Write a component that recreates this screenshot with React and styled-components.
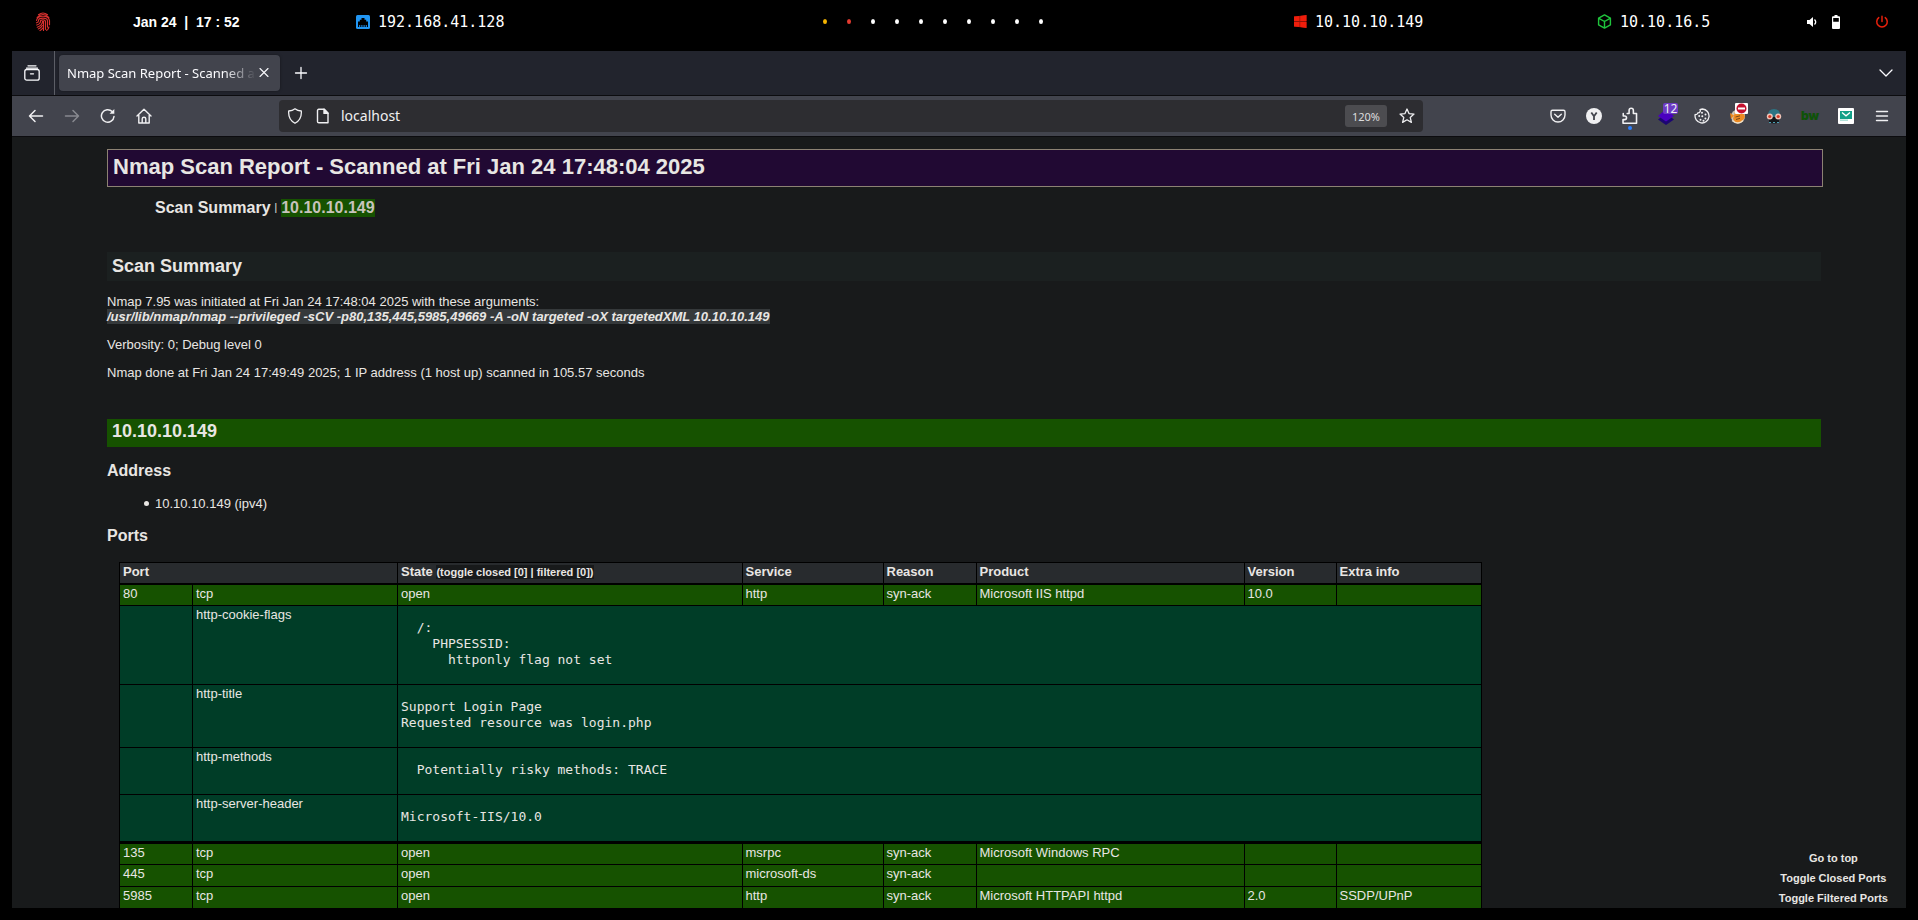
import React from "react";
import styled, { createGlobalStyle, css } from "styled-components";

const Global = createGlobalStyle`
  * { box-sizing: border-box; }
  html, body, #root { height: 100%; }
  body { margin: 0; background: #000; color: #e8e6e3; font-family: "Liberation Sans", Arial, sans-serif; }
  button { font: inherit; color: inherit; background: none; border: 0; padding: 0; cursor: pointer; }
  a { color: inherit; text-decoration: none; }
  svg { display: block; }
`;

const Desktop = styled.div`
  display: flex;
  flex-direction: column;
  height: 100vh;
  padding-bottom: 12px;
  background: #000;
`;

/* ---------- status bar ---------- */
const StatusBar = styled.header`
  flex: none;
  display: grid;
  grid-template-columns:
    minmax(0, 98fr) minmax(0, 223fr) minmax(0, 467fr) minmax(0, 471fr)
    minmax(0, 303fr) minmax(0, 210fr) minmax(0, 111fr);
  align-items: center;
  height: 51px;
  padding: 0 0 8px 35px;
  color: #fff;
`;
const Clock = styled.time`
  font-size: 14px;
  font-weight: 700;
  white-space: pre;
`;
const Address = styled.div`
  display: flex;
  align-items: center;
  gap: 8px;
  font: 15px/20px "DejaVu Sans Mono", monospace;
  white-space: nowrap;
`;
const Dots = styled.nav`
  display: flex;
  gap: 20px;
`;
const Dot = styled.button`
  && {
    width: 4px;
    height: 5px;
    border-radius: 50%;
    background: ${(p) => p.$color || "#fff"};
  }
`;
const Tray = styled.div`
  display: flex;
  align-items: center;
`;
const TrayButton = styled.button`
  && { margin-right: ${(p) => p.$after || 0}px; }
`;

/* ---------- browser chrome ---------- */
const Browser = styled.section`
  flex: 1;
  min-height: 0;
  display: flex;
  flex-direction: column;
  margin: 0 12px;
  background: #181a1b;
  font-family: "Noto Sans", sans-serif;
`;
const TabStrip = styled.div`
  flex: none;
  display: flex;
  align-items: center;
  height: 44px;
  background: #22242d;
  color: #fbfbfe;
`;
const FirefoxView = styled.button`
  && {
    display: grid;
    place-items: center;
    width: 43px;
    height: 44px;
    padding-right: 2px;
    border-right: 1px solid #5c5e66;
  }
`;
const Tab = styled.div`
  display: flex;
  align-items: center;
  width: 221px;
  height: 36px;
  margin-left: 4px;
  padding: 0 8px;
  border-radius: 4px;
  background: #42444d;
  box-shadow: 0 0 3px rgba(0, 0, 0, 0.4);
  font-size: 13px;
`;
const TabTitle = styled.span`
  flex: 1;
  min-width: 0;
  white-space: nowrap;
  mask-image: linear-gradient(to left, transparent, #000 32px);
`;
const StripButton = styled.button`
  && {
    display: grid;
    place-items: center;
    width: 40px;
    height: 36px;
    margin-left: ${(p) => (p.$end ? "auto" : "1px")};
  }
`;
const Toolbar = styled.div`
  flex: none;
  display: flex;
  align-items: center;
  height: 42px;
  padding: 0 6px;
  border-top: 1px solid #0c0c0f;
  border-bottom: 1px solid #0c0c0f;
  background: #42444d;
  color: #f0f0f2;
`;
const ToolButton = styled.button`
  && {
    position: relative;
    display: grid;
    place-items: center;
    flex: none;
    width: 36px;
    height: 36px;
    opacity: ${(p) => (p.disabled ? 0.4 : 1)};
  }
`;
const CountBadge = styled.span`
  position: absolute;
  top: 5px;
  right: 6px;
  width: 15px;
  height: 11px;
  border-radius: 2px;
  background: #6c3bc4;
  font-size: 12px;
  line-height: 11px;
  text-align: center;
`;
const NewDot = styled.i`
  position: absolute;
  bottom: 4px;
  left: 16px;
  width: 4px;
  height: 4px;
  border-radius: 50%;
  background: #2a7fff;
`;
const UrlBar = styled.form`
  flex: 1;
  min-width: 0;
  display: flex;
  align-items: center;
  height: 32px;
  margin: 0 117px;
  padding: 0 8px;
  border-radius: 4px;
  background: #2d2d31;
`;
const UrlInput = styled.input`
  flex: 1;
  min-width: 0;
  margin-left: 10px;
  padding: 0;
  border: 0;
  outline: 0;
  background: none;
  color: #f0f0f2;
  font: 14px/20px "Noto Sans", sans-serif;
`;
const ZoomButton = styled.button`
  && {
    height: 22px;
    margin-right: 12px;
    padding: 0 7px;
    border-radius: 3px;
    background: #4c4c50;
    color: #dcdcde;
    font-size: 11px;
  }
`;
const UrlIcon = styled.span`
  margin-right: ${(p) => p.$after || 0}px;
`;

/* ---------- report ---------- */
const Viewport = styled.main`
  position: relative;
  flex: 1;
  min-height: 0;
  overflow: hidden;
  padding: 12px 83px 0 95px;
  font-family: "Liberation Sans", Arial, sans-serif;
  font-size: 13px;
  line-height: 15px;
`;
const Title = styled.h1`
  height: 38px;
  margin: 0;
  padding: 0 5px;
  border: 1px solid #8c8273;
  background: #210933;
  font-size: 22px;
  line-height: 34px;
`;
const Menu = styled.nav`
  display: flex;
  align-items: center;
  gap: 4px;
  padding: 12px 48px 0;
  font-size: 10px;
  line-height: 18px;
`;
const MenuLink = styled.a`
  font-size: 16px;
  font-weight: 700;
  ${(p) => p.$up && css`background: #165200; color: #c8c3bc;`}
`;
const SectionTitle = styled.h2`
  height: 29px;
  margin: 35px 2px 0 0;
  padding: 0 5px;
  background: #1b2020;
  font-size: 18px;
  line-height: 28px;
  ${(p) => p.$host && css`
    height: 28px;
    margin-top: 39px;
    background: #165200;
    line-height: 24px;
  `}
`;
const Paragraph = styled.p`
  margin: 13px 0 0;
`;
const Command = styled.em`
  background: #35393b;
  font-weight: 700;
`;
const SubTitle = styled.h3`
  margin: 15px 0 0;
  font-size: 16px;
  line-height: 18px;
`;
const AddressList = styled.ul`
  margin: 16px 0;
  padding-left: 37px;
  list-style: none;
`;
const AddressItem = styled.li`
  display: flex;
  align-items: center;
  gap: 6px;
  &::before {
    content: "";
    width: 5px;
    height: 5px;
    border-radius: 50%;
    background: currentColor;
  }
`;
const PortTable = styled.table`
  table-layout: fixed;
  width: 79.4%;
  margin: 17px 0 0 12px;
  border-collapse: collapse;
  background: #000;
  line-height: 16px;
  text-align: left;
`;
const HeadCell = styled.th`
  height: 21px;
  padding: 0 3px 1px;
  border: 1px solid #000;
  border-bottom-width: 2px;
  background: #282b2e;
`;
const Toggle = styled.button`
  && {
    background: #181a1b;
    font-size: 11px;
    line-height: 14px;
  }
`;
const PortRow = styled.tr`
  border-top: ${(p) => (p.$first ? 3 : 1)}px solid #000;
`;
const Cell = styled.td`
  height: 22px;
  padding: 1px 3px 3px;
  border: 1px solid #000;
  background: ${(p) => (p.$script ? "#003d27" : "#165200")};
  vertical-align: top;
`;
const Output = styled.pre`
  margin: 13px 0;
  font: 13px/16px "DejaVu Sans Mono", monospace;
`;
const FloatMenu = styled.nav`
  position: absolute;
  right: 18px;
  bottom: 0;
  display: flex;
  flex-direction: column;
  align-items: center;
  font-size: 11px;
  font-weight: 700;
  line-height: 20px;
`;

/* ---------- icons ---------- */
const Line = ({ size = 16, w = 1.3, color = "currentColor", children, ...rest }) => (
  <svg width={size} height={size} viewBox="0 0 16 16" fill="none" stroke={color} strokeWidth={w} strokeLinecap="round" strokeLinejoin="round" aria-hidden="true" {...rest}>
    {children}
  </svg>
);
const FingerprintIcon = () => (
  <svg width="16" height="20" viewBox="0 0 16 20" fill="none" stroke="#d8302e" strokeWidth="1.15" strokeLinecap="round" aria-hidden="true">
    <path d="M3.500 2.700q4.500-3.400 9 0M2.200 5.500q5.800-6 11.600 0M1.500 8.500q.6-4.300 6.500-4.300t6.500 4.500v4M1.500 10.800q2-.3 2-2.300 0-2.400 4.500-2.400t4.500 3v6M1.700 13q3.800-1 3.800-4 0-1.200 2.500-1.200t2.500 2v7.500M2.300 15.200q5.200-2 5.200-5.700h1v9M3.300 17q3-1.200 4-3.500M5 18.600q1.600-.8 2.500-2.400M13.900 15l-.8 2M11.700 18.300l.5-.6" />
  </svg>
);
const EthernetIcon = () => (
  <svg width="14" height="14" viewBox="0 0 14 14" aria-hidden="true">
    <rect width="14" height="14" rx="1.5" fill="#2196f3" />
    <path d="M2 12V6.500h1.800V4.700h1.700V3h3v1.700h1.700v1.800H12V12h-1.200v-2h-1v2H8.600v-2h-1v2H6.400v-2h-1v2H4.200v-2h-1v2z" fill="#000" />
  </svg>
);
const WindowsIcon = () => (
  <svg width="13" height="13" viewBox="0 0 13 13" aria-hidden="true">
    <path d="M0 1.500 12.500 0v13L0 11.500z" fill="#8f1208" />
    <path d="M0 1.500 5.500 1v5H0zM6.200 .9 12.500 0v6H6.200zM0 7h5.500v5L0 11.500zM6.200 7h6.300v6l-6.300-.9z" fill="#f01e0c" />
  </svg>
);
const CubeIcon = () => (
  <Line size={15} w={1.5} color="#1fc43c"><path d="M8 1 14.300 4.400v7.200L8 15l-6.300-3.400V4.400zM2 4.600 8 8l6-3.400M8 8v7" /></Line>
);
const SpeakerIcon = () => (
  <svg width="10" height="12" viewBox="0 0 10 12" fill="#fff"><path d="M0 4h2.500L6 1v10L2.500 8H0z" /><path d="M7.500 3.500q2.400 2.500 0 5" fill="none" stroke="#fff" strokeWidth="1.300" /></svg>
);
const BatteryIcon = () => (
  <svg width="8" height="14" viewBox="0 0 8 14"><path fillRule="evenodd" fill="#fff" d="M2.500 0h3v1.200H7q1 0 1 1V13q0 1-1 1H1q-1 0-1-1V2.200q0-1 1-1h1.500zM1.200 3v3.800h5.600V3z" /></svg>
);
const PowerIcon = () => (
  <Line size={14} w={1.7} color="#e8200c"><path d="M8 1.500v6M4.300 3a6 6 0 1 0 7.400 0" /></Line>
);
const PuzzleIcon = () => (
  <Line size={18} w={1.4}><path d="M2 5.800V8h1.300a1.600 1.600 0 0 1 0 3.200H1.800v3.200h12V5.800h-2.800V3a1.900 1.900 0 0 0-3.800 0v2.800H5.500" /></Line>
);
const LayersIcon = () => (
  <svg width="18" height="18" viewBox="0 0 18 18"><path d="M9 6 17 12.500 9 18 1 12.500z" fill="#1c0672" /><path d="M9 2 17 9 9 14.500 1 9z" fill="#4a00c0" /></svg>
);
const CookieIcon = () => (
  <Line><path d="M8.500 1a7 7 0 1 1-7.300 5.500 2 2 0 0 0 2.600-1.700 2.200 2.200 0 0 0 2.200-3.300A7 7 0 0 1 8.500 1z" /><path strokeWidth="2" d="M8 4.800h0M5.200 8h0M8.300 8.300h0M11.500 6.500h0M11.400 10.500h0M6.500 11.700h0M9.500 12.800h0" /></Line>
);
const FoxIcon = () => (
  <svg width="20" height="26" viewBox="-1 0 20 26">
    <circle cx="9" cy="13.500" r="7" fill="#cfc6b8" />
    <path d="M1 10 5 12.500l-3 3.500zM4 16l2-7 9 2 1 3-3 5-6 1z" fill="#ee8a22" />
    <path d="M3 17.500q6 5 11 0" fill="none" stroke="#efe0c8" strokeWidth="1.300" />
    <path d="M6.500 14 11 12.800M7 16.500l4-1.200" stroke="#7c4a16" strokeWidth="1" />
    <rect x="6" y="0" width="13" height="11" rx="1" fill="#fff" />
    <circle cx="12.500" cy="5.500" r="5" fill="#c5102e" />
    <rect x="9" y="4.500" width="7" height="2" fill="#fff" />
  </svg>
);
const MaskIcon = () => (
  <svg width="16" height="16" viewBox="0 0 16 16">
    <path d="M2 7q0-6 6-6t6 6v2H2z" fill="#2d7484" />
    <path d="M3 9h10v5.500q-5 2-10 0z" fill="#15181b" />
    <circle cx="3.800" cy="8.500" r="3" fill="#f0c5b8" /><circle cx="12.200" cy="8.500" r="3" fill="#f0c5b8" />
    <circle cx="3.800" cy="8.500" r="1.600" fill="#d23a26" /><circle cx="12.200" cy="8.500" r="1.600" fill="#d23a26" />
    <path d="M3 14.500h2M7 14.500h2M11 14.500h2" stroke="#4aa0b4" strokeWidth="1.200" />
  </svg>
);
const BuiltWith = styled.span`
  color: #0e5208;
  font: 900 12px/16px "Inter", "Noto Sans", sans-serif;
`;
const MailIcon = () => (
  <svg width="16" height="16" viewBox="0 0 16 16">
    <rect width="16" height="16" rx="1" fill="#fff" />
    <path d="M2 3h12v8H2z" fill="#12a088" /><path d="M4 4.500 8 7.800l4-3.300" stroke="#fff" strokeWidth="1.300" fill="none" />
    <path d="M2 11.500h8v1.300H2z" fill="#9edcd0" />
  </svg>
);
const AccountIcon = () => (
  <svg width="16" height="16" viewBox="0 0 16 16"><circle cx="8" cy="8" r="8" fill="#f0f0f2" /><path d="M5.300 4.500 8 8.300l2.700-3.800M8 8.300V12" fill="none" stroke="#42444d" strokeWidth="1.800" /></svg>
);

/* ---------- data ---------- */
const columns = [73, 205, null, 141, 93, 268, 92, 145];
const workspaces = ["#f5b400", "#e53b30", null, null, null, null, null, null, null, null];
const scripts = [
  ["http-cookie-flags", "  /: \n    PHPSESSID: \n      httponly flag not set"],
  ["http-title", "Support Login Page\nRequested resource was login.php"],
  ["http-methods", "  Potentially risky methods: TRACE"],
  ["http-server-header", "Microsoft-IIS/10.0"],
];
const ports = [
  { cells: ["80", "tcp", "open", "http", "syn-ack", "Microsoft IIS httpd", "10.0", ""], scripts },
  { cells: ["135", "tcp", "open", "msrpc", "syn-ack", "Microsoft Windows RPC", "", ""] },
  { cells: ["445", "tcp", "open", "microsoft-ds", "syn-ack", "", "", ""] },
  { cells: ["5985", "tcp", "open", "http", "syn-ack", "Microsoft HTTPAPI httpd", "2.0", "SSDP/UPnP"] },
];

function Status() {
  return (
    <StatusBar>
      <FingerprintIcon />
      <Clock>{"Jan 24  |  17 : 52"}</Clock>
      <Address><EthernetIcon />192.168.41.128</Address>
      <Dots aria-label="Workspaces">
        {workspaces.map((color, i) => <Dot key={i} $color={color} aria-label={`Workspace ${i + 1}`} />)}
      </Dots>
      <Address><WindowsIcon />10.10.10.149</Address>
      <Address><CubeIcon />10.10.16.5</Address>
      <Tray>
        <TrayButton $after={15} aria-label="Volume"><SpeakerIcon /></TrayButton>
        <TrayButton $after={35} aria-label="Battery"><BatteryIcon /></TrayButton>
        <TrayButton aria-label="Power"><PowerIcon /></TrayButton>
      </Tray>
    </StatusBar>
  );
}

function Chrome() {
  return (
    <>
      <TabStrip>
        <FirefoxView aria-label="Recent browsing">
          <Line><path d="M4 .8h8M2.500 3.200h11" /><rect x=".8" y="4.500" width="14.400" height="10.700" rx="2" /><path d="M6.500 8.800h3" /></Line>
        </FirefoxView>
        <Tab>
          <TabTitle>Nmap Scan Report - Scanned a</TabTitle>
          <button aria-label="Close tab"><Line w={1.1}><path d="m4 3.500 8 8m0-8-8 8" /></Line></button>
        </Tab>
        <StripButton aria-label="New tab"><Line><path d="M8 2.500v11M2.500 8h11" /></Line></StripButton>
        <StripButton $end aria-label="List all tabs"><Line><path d="m2 5 6 6 6-6" /></Line></StripButton>
      </TabStrip>
      <Toolbar>
        <ToolButton aria-label="Back"><Line w={1.5}><path d="M14.500 8h-13M7 2.500 1.500 8 7 13.500" /></Line></ToolButton>
        <ToolButton disabled aria-label="Forward"><Line w={1.5}><path d="M1.500 8h13M9 2.500 14.500 8 9 13.500" /></Line></ToolButton>
        <ToolButton aria-label="Reload"><Line w={1.5}><path d="M14 8.500a6.300 6.300 0 1 1-1.800-5" /><path d="M14.300 1v4.800H9.500z" fill="currentColor" stroke="none" /></Line></ToolButton>
        <ToolButton aria-label="Home"><Line w={1.4}><path d="m1 8 7-6.700L15 8M2.800 7v8h10.400V7M6.200 15v-4.200q0-1.500 1.800-1.500t1.800 1.500V15" /></Line></ToolButton>
        <UrlBar onSubmit={(e) => e.preventDefault()}>
          <UrlIcon $after={12}><Line><path d="M8 .8q2.500 2 6.300 2.200Q15 11.500 8 15.300 1 11.500 1.700 3 5.500 2.800 8 .8z" /></Line></UrlIcon>
          <UrlIcon><Line w={1.4}><path d="M3.800 1.300h5.500L13 5v9.700H3.800q-1.300 0-1.300-1.300V2.600q0-1.300 1.300-1.300z" /><path d="M9 1.300V5.400h4z" fill="currentColor" /></Line></UrlIcon>
          <UrlInput aria-label="Address" defaultValue="localhost" />
          <ZoomButton type="button">120%</ZoomButton>
          <button type="button" aria-label="Bookmark this page"><Line><path d="m8 1 2 4.600 5 .5-3.800 3.300 1.200 5L8 11.800l-4.400 2.600 1.200-5L1 6.100l5-.5z" /></Line></button>
        </UrlBar>
        <ToolButton aria-label="Save to Pocket"><Line w={1.4}><path d="M2.500 2.300h11q1.500 0 1.500 1.500V7a7 7 0 0 1-14 0V3.800q0-1.500 1.500-1.500z" /><path d="m4.700 6.300 3.300 3 3.300-3" /></Line></ToolButton>
        <ToolButton aria-label="Account"><AccountIcon /></ToolButton>
        <ToolButton aria-label="Extensions"><PuzzleIcon /><NewDot /></ToolButton>
        <ToolButton aria-label="Layers"><LayersIcon /><CountBadge>12</CountBadge></ToolButton>
        <ToolButton aria-label="Cookie editor"><CookieIcon /></ToolButton>
        <ToolButton aria-label="Proxy"><FoxIcon /></ToolButton>
        <ToolButton aria-label="Dark theme"><MaskIcon /></ToolButton>
        <ToolButton aria-label="BuiltWith"><BuiltWith>bw</BuiltWith></ToolButton>
        <ToolButton aria-label="Mail"><MailIcon /></ToolButton>
        <ToolButton aria-label="Menu"><Line w={1.4}><path d="M2.500 3.500h11M2.500 8h11M2.500 12.500h11" /></Line></ToolButton>
      </Toolbar>
    </>
  );
}

function PortsTable() {
  return (
    <PortTable>
      <colgroup>{columns.map((width, i) => <col key={i} width={width ?? undefined} />)}</colgroup>
      <thead>
        <tr>
          <HeadCell colSpan={2}>Port</HeadCell>
          <HeadCell>State <Toggle>(toggle closed [0] | filtered [0])</Toggle></HeadCell>
          {["Service", "Reason", "Product", "Version", "Extra info"].map((name) => <HeadCell key={name}>{name}</HeadCell>)}
        </tr>
      </thead>
      <tbody>
        {ports.map((port, index) => (
          <React.Fragment key={port.cells[0]}>
            <PortRow $first={Boolean(ports[index - 1]?.scripts)}>
              {port.cells.map((text, i) => <Cell key={i}>{text}</Cell>)}
            </PortRow>
            {port.scripts?.map(([name, output]) => (
              <tr key={name}>
                <Cell $script />
                <Cell $script>{name}</Cell>
                <Cell $script colSpan={6}><Output>{output}</Output></Cell>
              </tr>
            ))}
          </React.Fragment>
        ))}
      </tbody>
    </PortTable>
  );
}

export default function App() {
  return (
    <Desktop>
      <Global />
      <Status />
      <Browser>
        <Chrome />
        <Viewport id="top">
          <Title>Nmap Scan Report - Scanned at Fri Jan 24 17:48:04 2025</Title>
          <Menu>
            <MenuLink href="#summary">Scan Summary</MenuLink>|
            <MenuLink $up href="#host">10.10.10.149</MenuLink>
          </Menu>
          <SectionTitle id="summary">Scan Summary</SectionTitle>
          <Paragraph>
            Nmap 7.95 was initiated at Fri Jan 24 17:48:04 2025 with these arguments:<br />
            <Command>/usr/lib/nmap/nmap --privileged -sCV -p80,135,445,5985,49669 -A -oN targeted -oX targetedXML 10.10.10.149</Command>
          </Paragraph>
          <Paragraph>Verbosity: 0; Debug level 0</Paragraph>
          <Paragraph>Nmap done at Fri Jan 24 17:49:49 2025; 1 IP address (1 host up) scanned in 105.57 seconds</Paragraph>
          <SectionTitle $host id="host">10.10.10.149</SectionTitle>
          <SubTitle>Address</SubTitle>
          <AddressList><AddressItem>10.10.10.149 (ipv4)</AddressItem></AddressList>
          <SubTitle>Ports</SubTitle>
          <PortsTable />
          <FloatMenu>
            <a href="#top">Go to top</a>
            <button>Toggle Closed Ports</button>
            <button>Toggle Filtered Ports</button>
          </FloatMenu>
        </Viewport>
      </Browser>
    </Desktop>
  );
}
